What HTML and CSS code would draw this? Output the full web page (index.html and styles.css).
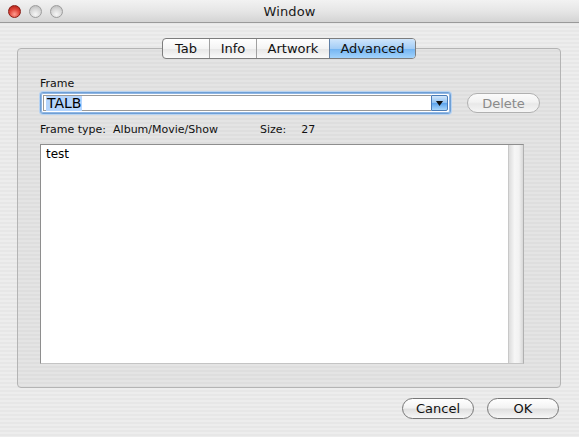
FILE: index.html
```html
<!DOCTYPE html>
<html>
<head>
<meta charset="utf-8">
<link rel="stylesheet" href="styles.css">
</head>
<body>
<div class="window">
  <div class="titlebar">
    <div class="lights">
      <span class="light red"></span>
      <span class="light"></span>
      <span class="light"></span>
    </div>
    <div class="title">Window</div>
  </div>
  <div class="content">
    <div class="tabs">
      <span class="tab t1">Tab</span>
      <span class="tab t2">Info</span>
      <span class="tab t3">Artwork</span>
      <span class="tab t4 active">Advanced</span>
    </div>
    <div class="group">
      <div class="label">Frame</div>
      <div class="frame-row">
        <div class="combo">
          <div class="combo-field"><span class="sel">TALB</span></div>
          <div class="combo-arrow"><svg width="7" height="5" viewBox="0 0 7 5"><path d="M0 0H7L3.5 5Z" fill="#111"/></svg></div>
        </div>
        <div class="pill disabled delete">Delete</div>
      </div>
      <div class="info-row">
        <span class="info-key">Frame type:</span><span class="info-val">Album/Movie/Show</span>
        <span class="info-key size-key">Size:</span><span class="info-val">27</span>
      </div>
      <div class="textarea">
        <div class="text">test</div>
        <div class="scroll"></div>
      </div>
    </div>
    <div class="buttons">
      <div class="pill">Cancel</div>
      <div class="pill">OK</div>
    </div>
  </div>
</div>
</body>
</html>
```

FILE: styles.css
```css
html, body {
  margin: 0;
  padding: 0;
}
body {
  width: 579px;
  height: 437px;
  overflow: hidden;
  font-family: "DejaVu Sans", "Liberation Sans", sans-serif;
  color: #000;
}
.window {
  width: 579px;
  height: 437px;
  display: flex;
  flex-direction: column;
  background: repeating-linear-gradient(to bottom, #ededed 0, #ededed 2px, #e7e7e7 2px, #e7e7e7 4px);
}
.titlebar {
  height: 22px;
  flex: none;
  position: relative;
  display: flex;
  align-items: center;
  justify-content: center;
  background: linear-gradient(to bottom, #f2f2f2 0%, #e6e6e6 50%, #d4d4d4 100%);
  border-bottom: 1px solid #9a9a9a;
}
.lights {
  position: absolute;
  left: 8px;
  top: 5px;
  display: flex;
  gap: 8px;
}
.light {
  width: 13px;
  height: 13px;
  border-radius: 50%;
  box-sizing: border-box;
  border: 1px solid #9c9c9c;
  background: radial-gradient(circle at 50% 75%, #f6f6f6 0, #d6d6d6 55%, #b4b4b4 100%);
}
.light.red {
  border-color: #8a1c14;
  background: radial-gradient(circle at 50% 75%, #ff9d90 0, #e0463a 50%, #a41a10 100%);
}
.title {
  font-size: 13px;
  color: #1a1a1a;
  letter-spacing: 0.1px;
}
.content {
  flex: 1;
  display: flex;
  flex-direction: column;
  padding: 15px 18px 0 17px;
}
.tabs {
  align-self: center;
  display: flex;
  height: 21px;
  box-sizing: border-box;
  position: relative;
  z-index: 1;
  border: 1px solid #7d7d7d;
  border-radius: 4px;
  overflow: hidden;
  background: linear-gradient(to bottom, #ffffff 0%, #f4f4f4 50%, #e6e6e6 51%, #fafafa 100%);
}
.tab {
  font-size: 13px;
  line-height: 19px;
  text-align: center;
  box-sizing: border-box;
  border-left: 1px solid #a0a0a0;
  color: #111;
}
.t1 { width: 46px; border-left: none; }
.t2 { width: 47px; }
.t3 { width: 73px; }
.t4 { width: 86px; }
.tab.active {
  background: linear-gradient(to bottom, #cfe5fb 0%, #a3cdf6 50%, #72b3f1 51%, #a2d3fc 100%);
  border-left-color: #5f7fa6;
}
.group {
  margin-top: -11px;
  height: 340px;
  box-sizing: border-box;
  border: 1px solid #b4b4b4;
  border-radius: 4px;
  background: rgba(0, 0, 0, 0.035);
  padding: 28px 10px 0 22px;
  display: flex;
  flex-direction: column;
}
.label {
  font-size: 11px;
  line-height: 13px;
  color: #111;
}
.frame-row {
  display: flex;
  align-items: center;
  margin-top: 2px;
  gap: 16px;
}
.combo {
  flex: none;
  width: 411px;
  height: 22px;
  box-sizing: border-box;
  display: flex;
  border: 1px solid #6f9fd4;
  border-radius: 3px;
  box-shadow: 0 0 0 1px #b7d3f2, inset 0 0 0 1px #8fb6e4;
  padding: 2px;
  background: #fff;
}
.combo-field {
  flex: 1;
  background: #fff;
  border: 1px solid #9a9a9a;
  border-right: none;
  font-size: 14px;
  line-height: 15px;
  padding-left: 2px;
  display: flex;
  align-items: center;
}
.sel {
  background: #b5d5fd;
  padding: 0 1px;
}
.combo-arrow {
  width: 15px;
  flex: none;
  display: flex;
  align-items: center;
  justify-content: center;
  border: 1px solid #4a7bb6;
  border-radius: 0 2px 2px 0;
  background: linear-gradient(to bottom, #d2e6fa 0%, #8dc0f2 50%, #5aa2ec 51%, #a8d6fb 100%);
}
.pill {
  height: 21px;
  box-sizing: border-box;
  border: 1px solid #777;
  border-radius: 11px;
  display: flex;
  align-items: center;
  justify-content: center;
  font-size: 13px;
  color: #111;
  background: linear-gradient(to bottom, #ffffff 0%, #f3f3f3 45%, #e0e0e0 55%, #f7f7f7 100%);
}
.pill.disabled {
  color: #8a8a8a;
  border-color: #b0b0b0;
  background: linear-gradient(to bottom, #fbfbfb 0%, #f2f2f2 45%, #e8e8e8 55%, #f6f6f6 100%);
}
.delete {
  flex: none;
  width: 73px;
  height: 20px;
}
.info-row {
  font-size: 11px;
  line-height: 13px;
  margin-top: 9px;
  display: flex;
  color: #111;
}
.info-key {
  margin-right: 7px;
}
.size-key {
  margin-left: 42px;
  margin-right: 15px;
}
.textarea {
  margin-top: 8px;
  width: 484px;
  height: 220px;
  box-sizing: border-box;
  border: 1px solid #8e8e8e;
  border-right-color: #b0b0b0;
  border-bottom-color: #c4c4c4;
  background: #fff;
  display: flex;
}
.text {
  flex: 1;
  font-size: 12px;
  line-height: 14px;
  padding: 2px 5px;
}
.scroll {
  width: 14px;
  flex: none;
  background: linear-gradient(to right, #dcdcdc 0%, #f6f6f6 40%, #f2f2f2 70%, #d8d8d8 100%);
  border-left: 1px solid #c8c8c8;
}
.buttons {
  display: flex;
  justify-content: flex-end;
  gap: 13px;
  margin-top: 10px;
  padding-right: 2px;
}
.buttons .pill {
  width: 72px;
}
```
